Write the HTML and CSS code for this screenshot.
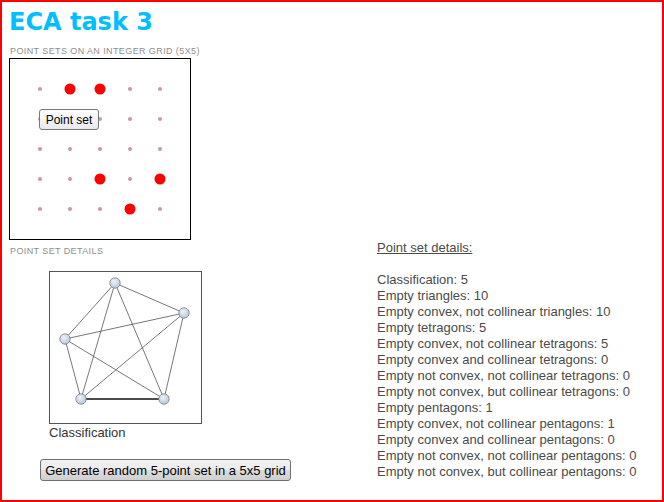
FILE: index.html
```html
<!DOCTYPE html>
<html>
<head>
<meta charset="utf-8">
<title>ECA task 3</title>
<link rel="stylesheet" href="styles.css">
</head>
<body>
<div class="page">
  <div class="left">
    <h1 class="title">ECA task 3</h1>
    <div class="label label-grid">POINT SETS ON AN INTEGER GRID (5X5)</div>
    <div class="grid-box">
      <svg class="grid-svg" width="180" height="180" viewBox="0 0 180 180">
        <g fill="#c99a9a">
          <circle cx="30" cy="30" r="2"/><circle cx="120" cy="30" r="2"/><circle cx="150" cy="30" r="2"/>
          <circle cx="30" cy="60" r="2"/><circle cx="60" cy="60" r="2"/><circle cx="90" cy="60" r="2"/><circle cx="120" cy="60" r="2"/><circle cx="150" cy="60" r="2"/>
          <circle cx="30" cy="90" r="2"/><circle cx="60" cy="90" r="2"/><circle cx="90" cy="90" r="2"/><circle cx="120" cy="90" r="2"/><circle cx="150" cy="90" r="2"/>
          <circle cx="30" cy="120" r="2"/><circle cx="60" cy="120" r="2"/><circle cx="120" cy="120" r="2"/>
          <circle cx="30" cy="150" r="2"/><circle cx="60" cy="150" r="2"/><circle cx="90" cy="150" r="2"/><circle cx="150" cy="150" r="2"/>
        </g>
        <g fill="#ff0000">
          <circle cx="60" cy="30" r="5.5"/><circle cx="90" cy="30" r="5.5"/>
          <circle cx="90" cy="120" r="5.5"/><circle cx="150" cy="120" r="5.5"/>
          <circle cx="120" cy="150" r="5.5"/>
        </g>
      </svg>
      <button class="btn btn-point">Point set</button>
    </div>
    <div class="label label-details">POINT SET DETAILS</div>
    <div class="graph-box">
      <svg class="graph-svg" width="151" height="151" viewBox="0 0 151 151">
        <defs>
          <radialGradient id="node" cx="40%" cy="35%" r="70%">
            <stop offset="0" stop-color="#eef2f8"/>
            <stop offset="1" stop-color="#b4c4da"/>
          </radialGradient>
        </defs>
        <g stroke="#555" stroke-width="0.8" fill="none">
          <line x1="65" y1="11" x2="134" y2="41"/>
          <line x1="65" y1="11" x2="15" y2="67"/>
          <line x1="65" y1="11" x2="31" y2="127"/>
          <line x1="65" y1="11" x2="114" y2="127"/>
          <line x1="134" y1="41" x2="15" y2="67"/>
          <line x1="134" y1="41" x2="31" y2="127"/>
          <line x1="134" y1="41" x2="114" y2="127"/>
          <line x1="15" y1="67" x2="31" y2="127"/>
          <line x1="15" y1="67" x2="114" y2="127"/>
        </g>
        <line x1="31" y1="127" x2="114" y2="127" stroke="#111" stroke-width="1.4"/>
        <g fill="url(#node)" stroke="#7a7f88" stroke-width="0.8">
          <circle cx="65" cy="11" r="5.2"/>
          <circle cx="134" cy="41" r="5.2"/>
          <circle cx="15" cy="67" r="5.2"/>
          <circle cx="31" cy="127" r="5.2"/>
          <circle cx="114" cy="127" r="5.2"/>
        </g>
      </svg>
    </div>
    <div class="caption">Classification</div>
    <button class="btn btn-generate">Generate random 5-point set in a 5x5 grid</button>
  </div>
  <div class="right">
    <div class="details-head">Point set details:</div>
    <ul class="details">
      <li>Classification: 5</li>
      <li>Empty triangles: 10</li>
      <li>Empty convex, not collinear triangles: 10</li>
      <li>Empty tetragons: 5</li>
      <li>Empty convex, not collinear tetragons: 5</li>
      <li>Empty convex and collinear tetragons: 0</li>
      <li>Empty not convex, not collinear tetragons: 0</li>
      <li>Empty not convex, but collinear tetragons: 0</li>
      <li>Empty pentagons: 1</li>
      <li>Empty convex, not collinear pentagons: 1</li>
      <li>Empty convex and collinear pentagons: 0</li>
      <li>Empty not convex, not collinear pentagons: 0</li>
      <li>Empty not convex, but collinear pentagons: 0</li>
    </ul>
  </div>
</div>
</body>
</html>
```

FILE: styles.css
```css
html, body {
  margin: 0;
  padding: 0;
  background: #ffffff;
}

.page {
  width: 664px;
  height: 502px;
  box-sizing: border-box;
  border: 2px solid #ff0000;
  padding: 5px 0 0 7px;
  display: flex;
  font-family: "Liberation Sans", Arial, sans-serif;
  overflow: hidden;
}

.left {
  width: 368px;
  flex: none;
  display: flex;
  flex-direction: column;
  align-items: flex-start;
}

.title {
  margin: 0;
  font-family: "DejaVu Sans", sans-serif;
  font-weight: bold;
  font-size: 24px;
  line-height: 30px;
  color: #00bfff;
}

.label {
  font-family: "Liberation Sans", Arial, sans-serif;
  font-size: 9px;
  line-height: 11px;
  letter-spacing: 0.4px;
  color: #8e8e8e;
  padding-left: 1px;
}

.label-grid {
  margin-top: 9px;
}

.grid-box {
  position: relative;
  margin-top: 1px;
  width: 180px;
  height: 180px;
  border: 1px solid #000;
}

.grid-svg {
  display: block;
}

.btn {
  font-family: "Liberation Sans", Arial, sans-serif;
  color: #000;
  border: 1px solid #707070;
  border-radius: 3px;
  background: linear-gradient(#f2f2f2 0%, #ebebeb 50%, #dddddd 51%, #cfcfcf 100%);
  margin: 0;
  box-sizing: border-box;
  white-space: nowrap;
}

.btn-point {
  position: absolute;
  left: 29px;
  top: 50px;
  width: 60px;
  height: 21px;
  padding: 0;
  font-size: 12px;
  border-color: #7a7a7a;
  background: linear-gradient(#fdfdfe 0%, #f3f3f6 50%, #e8e8ee 100%);
}

.label-details {
  margin-top: 6px;
}

.graph-box {
  margin-top: 14px;
  margin-left: 40px;
  width: 151px;
  height: 151px;
  border: 1px solid #555;
}

.graph-svg {
  display: block;
}

.caption {
  margin-top: 1px;
  margin-left: 40px;
  font-size: 13px;
  line-height: 15px;
  color: #333;
}

.btn-generate {
  margin-top: 19px;
  margin-left: 31px;
  width: 251px;
  height: 22px;
  padding: 0 4px;
  font-size: 13px;
}

.right {
  padding-top: 233px;
  font-size: 13px;
  line-height: 16px;
  color: #4a4a4a;
}

.details-head {
  text-decoration: underline;
  margin-bottom: 16px;
}

.details {
  list-style: none;
  margin: 0;
  padding: 0;
}
```
